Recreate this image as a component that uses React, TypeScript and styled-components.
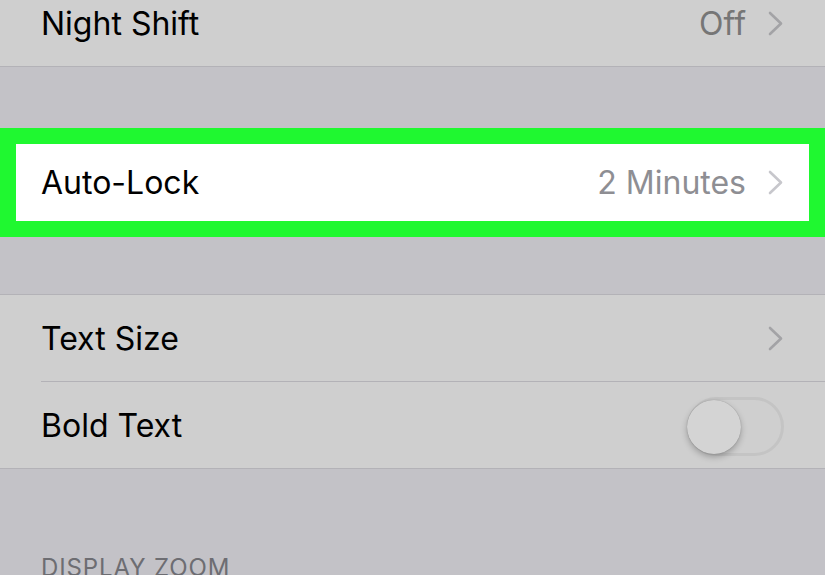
import React from "react";
import styled, { createGlobalStyle } from "styled-components";

const Global = createGlobalStyle`
  html, body { margin: 0; padding: 0; background: #c3c2c7; overflow: hidden; }
  body { font-family: Inter, "Liberation Sans", Arial, sans-serif; -webkit-font-smoothing: antialiased; }
`;

const Viewport = styled.div`
  width: 825px;
  height: 575px;
  overflow: hidden;
  background: #c3c2c7;
`;

const Page = styled.div`
  display: flex;
  flex-direction: column;
  margin-top: -20px;
`;

const Group = styled.div<{ $top?: boolean }>`
  background: #cfcfcf;
  border-top: ${(p) => (p.$top ? "1px solid #b3b2b7" : "none")};
  border-bottom: 1px solid #b3b2b7;
  display: flex;
  flex-direction: column;
`;

const Row = styled.div<{ $h: number; $divider?: boolean; $bg?: string; $inset?: number }>`
  height: ${(p) => p.$h}px;
  display: flex;
  align-items: center;
  padding: 0 ${(p) => 41 - (p.$inset || 0)}px;
  background: ${(p) => p.$bg || "transparent"};
  position: relative;
  box-sizing: border-box;
  ${(p) =>
    p.$divider
      ? `&::after { content: ""; position: absolute; left: 41px; right: 0; bottom: 0; height: 1px; background: #b3b2b7; }`
      : ""}
`;

const Label = styled.span`
  flex: 1;
  font-size: 32px;
  color: #000;
`;

const Value = styled.span<{ $light?: boolean }>`
  font-size: 32px;
  color: ${(p) => (p.$light ? "#8e8e93" : "#767676")};
  margin-right: 22px;
`;

const Gap = styled.div<{ $h: number }>`
  height: ${(p) => p.$h}px;
  flex-shrink: 0;
`;

const Highlight = styled.div`
  border: 16px solid #1ff830;
  background: #1ff830;
`;

const Track = styled.div`
  width: 97px;
  height: 59px;
  box-sizing: border-box;
  border: 3px solid #c4c4c4;
  border-radius: 30px;
  position: relative;
  margin-top: 2px;
`;

const Knob = styled.div`
  position: absolute;
  left: -3px;
  top: 0px;
  width: 54px;
  height: 54px;
  border-radius: 50%;
  background: #d4d4d4;
  box-shadow: 0 3px 6px rgba(0, 0, 0, 0.25), 0 0 1px rgba(0, 0, 0, 0.3);
`;

const SectionHeader = styled.div`
  padding: 0 41px;
  font-size: 24px;
  color: #6d6d72;
  letter-spacing: 0.9px;
  line-height: 1;
`;

const Chevron = ({ color }: { color: string }) => (
  <svg width="16" height="25" viewBox="0 0 16 25">
    <path d="M2 2 L13 12.5 L2 23" fill="none" stroke={color} strokeWidth="2.6" strokeLinecap="round" strokeLinejoin="round" />
  </svg>
);

export default function App() {
  return (
    <Viewport>
      <Global />
      <Page>
        <Group>
          <Row $h={86}>
            <Label>Night Shift</Label>
            <Value>Off</Value>
            <Chevron color="#a3a3a6" />
          </Row>
        </Group>
        <Gap $h={61} />
        <Highlight>
          <Row $h={77} $bg="#ffffff" $inset={16}>
            <Label>Auto-Lock</Label>
            <Value $light>2 Minutes</Value>
            <Chevron color="#c7c7cc" />
          </Row>
        </Highlight>
        <Gap $h={57} />
        <Group $top>
          <Row $h={87} $divider>
            <Label>Text Size</Label>
            <Chevron color="#a3a3a6" />
          </Row>
          <Row $h={86}>
            <Label>Bold Text</Label>
            <Track>
              <Knob />
            </Track>
          </Row>
        </Group>
        <Gap $h={87} />
        <SectionHeader>DISPLAY ZOOM</SectionHeader>
      </Page>
    </Viewport>
  );
}
